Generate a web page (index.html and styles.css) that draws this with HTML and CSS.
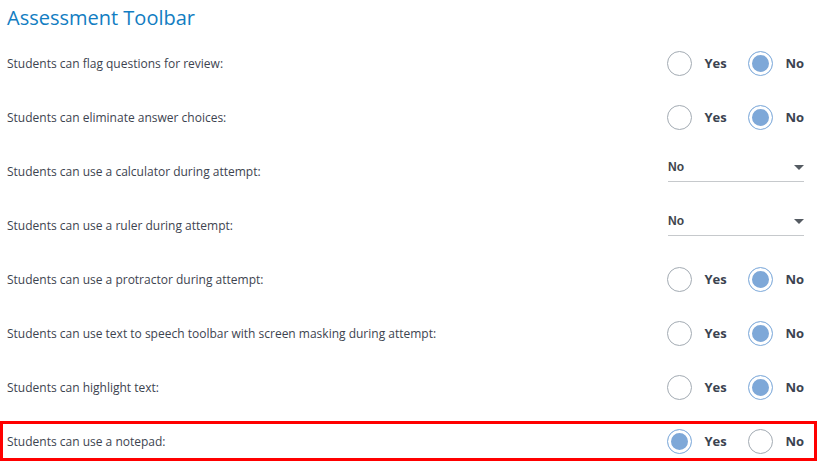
FILE: index.html
```html
<!DOCTYPE html>
<html lang="en">
<head>
  <meta charset="UTF-8">
  <title>Assessment Toolbar</title>
  <link rel="stylesheet" href="styles.css">
</head>
<body>
  <div class="settings">
    <h2 class="title">Assessment Toolbar</h2>

    <div class="rows">
      <div class="row">
        <span class="label">Students can flag questions for review:</span>
        <div class="choice">
          <span class="opt"><span class="radio"></span>Yes</span>
          <span class="opt"><span class="radio on"></span>No</span>
        </div>
      </div>

      <div class="row">
        <span class="label">Students can eliminate answer choices:</span>
        <div class="choice">
          <span class="opt"><span class="radio"></span>Yes</span>
          <span class="opt"><span class="radio on"></span>No</span>
        </div>
      </div>

      <div class="row">
        <span class="label">Students can use a calculator during attempt:</span>
        <div class="select">No<span class="caret"></span></div>
      </div>

      <div class="row">
        <span class="label">Students can use a ruler during attempt:</span>
        <div class="select">No<span class="caret"></span></div>
      </div>

      <div class="row">
        <span class="label">Students can use a protractor during attempt:</span>
        <div class="choice">
          <span class="opt"><span class="radio"></span>Yes</span>
          <span class="opt"><span class="radio on"></span>No</span>
        </div>
      </div>

      <div class="row">
        <span class="label">Students can use text to speech toolbar with screen masking during attempt:</span>
        <div class="choice">
          <span class="opt"><span class="radio"></span>Yes</span>
          <span class="opt"><span class="radio on"></span>No</span>
        </div>
      </div>

      <div class="row">
        <span class="label">Students can highlight text:</span>
        <div class="choice">
          <span class="opt"><span class="radio"></span>Yes</span>
          <span class="opt"><span class="radio on"></span>No</span>
        </div>
      </div>

      <!-- highlighted setting -->
      <div class="row marked">
        <span class="label">Students can use a notepad:</span>
        <div class="choice">
          <span class="opt"><span class="radio on"></span>Yes</span>
          <span class="opt"><span class="radio"></span>No</span>
        </div>
      </div>
    </div>
  </div>
</body>
</html>
```

FILE: styles.css
```css
body {
  margin: 0;
  background-color: #fff;
  font-family: 'Open Sans', sans-serif;
  color: #3d4450;
}
.settings {
  width: 817px;
}
.title {
  margin: 0;
  height: 43px;
  padding: 4px 0 0 7px;
  box-sizing: border-box;
  font-size: 20px;
  font-weight: 400;
  color: #127dc2;
  line-height: 28px;
}
.rows {
  display: flex;
  flex-direction: column;
  gap: 14px;
}
.row {
  height: 40px;
  box-sizing: border-box;
  border: 3px solid transparent;
  padding: 0 10px 0 4px;
  display: flex;
  align-items: center;
  justify-content: space-between;
}
.row.marked {
  border-color: #ff0000;
}
.label {
  font-size: 12px;
}
.choice {
  display: flex;
  align-items: center;
}
.opt {
  display: flex;
  align-items: center;
  font-size: 13px;
  font-weight: 700;
  color: #3b4350;
  width: 81px;
}
.opt:last-child {
  width: auto;
}
.radio {
  width: 25px;
  height: 25px;
  box-sizing: border-box;
  border: 1px solid #a3abb3;
  border-radius: 50%;
  margin-right: 12px;
  background-color: #fff;
}
.radio.on {
  border-color: #8db4df;
  background-color: #7ea8d8;
  box-shadow: inset 0 0 0 3px #fff;
}
.select {
  width: 136px;
  height: 24px;
  box-sizing: border-box;
  border-bottom: 1px solid #c6c9cc;
  font-family: 'Liberation Sans', Arial, sans-serif;
  font-size: 12px;
  font-weight: 700;
  color: #41464d;
  display: flex;
  align-items: flex-start;
  justify-content: space-between;
  padding-top: 2px;
  margin-top: -2px;
}
.caret {
  width: 0;
  height: 0;
  border-left: 5px solid transparent;
  border-right: 5px solid transparent;
  border-top: 5px solid #555b62;
  margin-top: 5px;
}
```
